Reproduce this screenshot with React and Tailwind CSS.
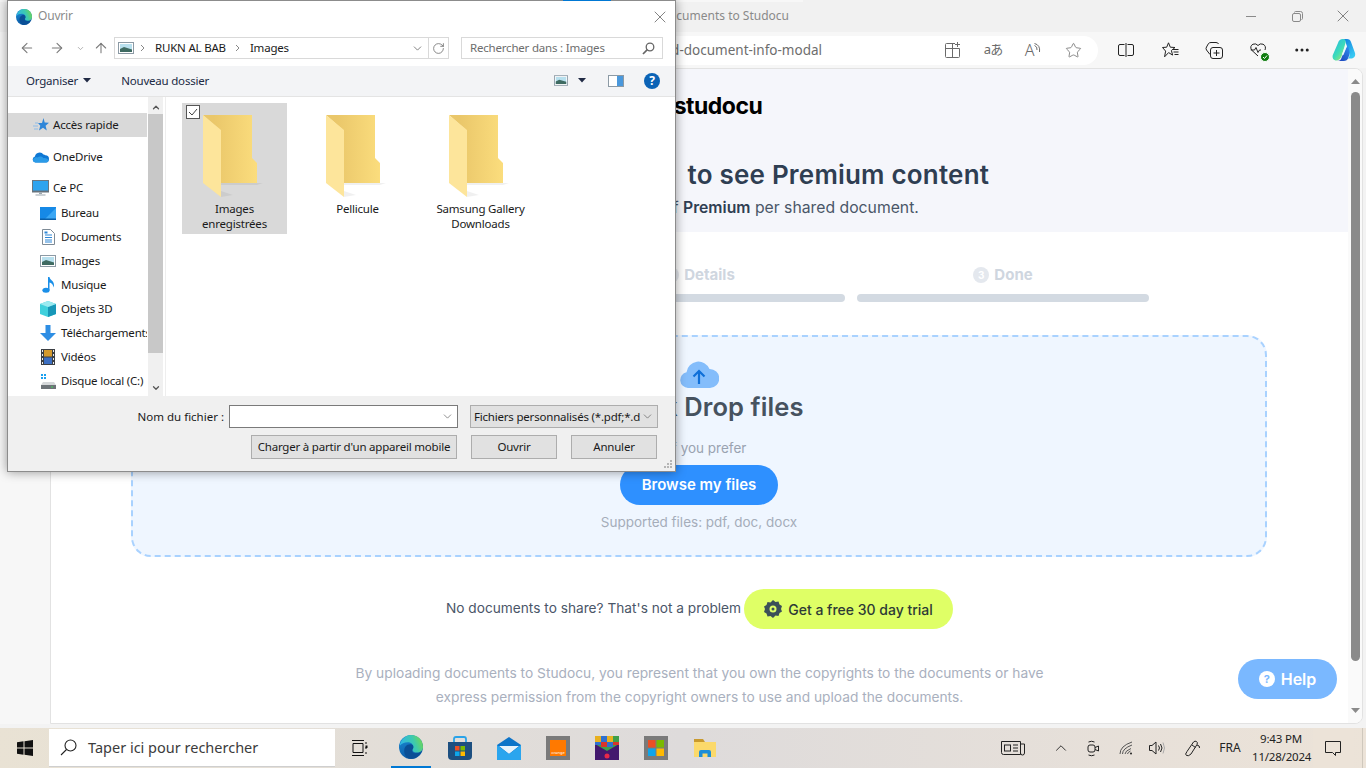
import React from "react";
import { ArrowLeft, ArrowRight, ArrowUp, ChevronDown, ChevronUp, RotateCw, X, MoreHorizontal, Star } from "lucide-react";

const Edge = ({ s = 24, id = "e" }) => (
  <svg width={s} height={s} viewBox="0 0 24 24">
    <defs>
      <linearGradient id={id + "a"} x1="0" y1="0" x2="0.3" y2="1"><stop offset="0" stopColor="#1c8fd8" /><stop offset="1" stopColor="#0b5aa6" /></linearGradient>
      <linearGradient id={id + "b"} x1="0" y1="0.6" x2="1" y2="0.3"><stop offset="0" stopColor="#2fb5e8" /><stop offset="0.6" stopColor="#3cc9b0" /><stop offset="1" stopColor="#72d84f" /></linearGradient>
    </defs>
    <circle cx="12" cy="12" r="12" fill={`url(#${id}a)`} />
    <path d="M9.5 23.5C5 21 4 15 6.5 11.5 8.5 8.8 13 8.3 14.6 10.8c.9 1.4.4 2.8-.6 3.7-1.2 1.1-1.3 2.6.5 3.4 2.5 1.1 6-.1 8-2.2-.9 4.4-7 9.6-13 7.8z" fill="#0a4f96" />
    <path d="M1 9C3 3 8 0 12 0c7 0 12 5 12 12 0 3.5-2.7 5.6-6 5.6-2.5 0-4.5-1-4.5-2.6 0-.8 1-1.5 1-3 0-2.6-2.5-4.8-5.5-4.8C5 7.200 2.500 8.500 1 10.500z" fill={`url(#${id}b)`} />
  </svg>
);

const Folder = ({ id }) => (
  <svg width="60" height="82" viewBox="0 0 60 82" className="block">
    <defs>
      <linearGradient id={id} x1="0" y1="0" x2="1" y2="0"><stop offset="0.2" stopColor="#eac76a" /><stop offset="1" stopColor="#fbdd7d" /></linearGradient>
    </defs>
    <path d="M54 68h6l-6 2H18v-2z" fill="#000" opacity="0.06" />
    <path d="M18 82l12-2-12-4z" fill="#000" opacity="0.06" />
    <path d="M0 0H49V43L54 48V68H17V15Z" fill={`url(#${id})`} />
    <path d="M0 0L18 15V82L0 68Z" fill="#fde59b" />
  </svg>
);

const SideIcon = ({ k }) => {
  switch (k) {
    case "star":
      return (
        <svg width="16" height="15" viewBox="0 0 16 15"><path d="M10.500 0l1.200 4.500 4.300.3-3.400 2.900 1.200 4.800-3.800-2.700-4 2.700 1.300-4.700L5 5h4z" fill="#2f86d8" /><path d="M2 5h3M0 8h5M1 11h4" stroke="#8fbce8" strokeWidth="1" /></svg>
      );
    case "cloud":
      return (
        <svg width="17" height="12" viewBox="0 0 17 12"><path d="M3.500 11.500a3 3 0 0 1-.6-5.900A4.800 4.800 0 0 1 11.500 3.500a3.800 3.800 0 0 1 1.900.8 3.600 3.600 0 0 1 0 7.200z" fill="#0f78d4" /><path d="M3.500 11.500a2.500 2.500 0 0 1-2-4c1-1.300 3-1.600 4-1 2-1.700 5-1 6 .7 2-.5 5 1 5 2.300 0 1-1.500 2-3.100 2z" fill="#2b9be8" /></svg>
      );
    case "pc":
      return (
        <svg width="17" height="16" viewBox="0 0 17 16"><rect x="0.500" y="0.500" width="16" height="10.500" fill="#2ea4ef" stroke="#6b7780" /><rect x="0" y="11" width="17" height="1.500" fill="#66727c" /><path d="M7 12.500h3v1.500H7zM3.500 14.500h10v1h-10z" fill="#9aa5ad" /></svg>
      );
    case "desk":
      return (
        <svg width="16" height="13" viewBox="0 0 16 13"><rect width="16" height="13" fill="#1689e6" /><path d="M16 1L5 12h11z" fill="#3ba7f4" /><rect y="11.500" width="16" height="1.500" fill="#0b5fa8" /></svg>
      );
    case "doc":
      return (
        <svg width="13" height="16" viewBox="0 0 13 16"><path d="M.5.500h8l4 4v11H.5z" fill="#fff" stroke="#7e8b96" /><path d="M3 6h7M3 8.500h7M3 11h7M3 13h7" stroke="#2e87d6" /><rect x="2.500" y="2.500" width="3" height="2" fill="#2e87d6" /></svg>
      );
    case "img":
      return <Pic w={16} h={12} />;
    case "music":
      return (
        <svg width="13" height="16" viewBox="0 0 13 16"><ellipse cx="4" cy="13.200" rx="3.600" ry="2.500" fill="#1a8fe8" /><path d="M6 13V0h1.500c.3 3 4.500 3.500 4.500 8 0 1-.3 1.800-.8 2.500.3-3-2-4.500-3.700-5V13z" fill="#1a8fe8" /></svg>
      );
    case "3d":
      return (
        <svg width="16" height="16" viewBox="0 0 16 16"><path d="M8 0l8 3v10l-8 3-8-3V3z" fill="#3fd0dc" /><path d="M8 6l8-3v10l-8 3z" fill="#1797b8" /><path d="M8 0l8 3-8 3-8-3z" fill="#9beaf0" /></svg>
      );
    case "dl":
      return (
        <svg width="16" height="16" viewBox="0 0 16 16"><path d="M5.500 0h5v8H16l-8 8-8-8h5.500z" fill="#2e8ee4" /></svg>
      );
    case "vid":
      return (
        <svg width="14" height="16" viewBox="0 0 14 16"><rect width="14" height="16" fill="#3b3f44" /><rect x="3" y="1" width="8" height="6.500" fill="#d49a2d" /><rect x="3" y="8.500" width="8" height="6.500" fill="#3c6fc2" /><path d="M1 1h1v2H1zM1 5h1v2H1zM1 9h1v2H1zM1 13h1v2H1zM12 1h1v2h-1zM12 5h1v2h-1zM12 9h1v2h-1zM12 13h1v2h-1z" fill="#eee" /></svg>
      );
    default:
      return (
        <svg width="15" height="15" viewBox="0 0 15 15"><path d="M0 0h2v2H0zM3 0h2v2H3zM0 3h2v2H0zM3 3h2v2H3z" fill="#19a0f0" /><path d="M2 8h11l2 3v4H0v-4z" fill="#d5d8da" /><rect y="11" width="15" height="4" fill="#6d7378" /><rect x="10" y="12.500" width="2" height="1" fill="#42d35a" /></svg>
      );
  }
};

const Pic = ({ w, h }) => (
  <svg width={w} height={h} viewBox="0 0 16 12">
    <rect x="0.500" y="0.500" width="15" height="11" fill="#fff" stroke="#8c9aa5" />
    <rect x="2" y="2" width="12" height="8" fill="#b8e0ee" />
    <path d="M2 7l4-2 8 2.500V10H2z" fill="#3f6b62" />
  </svg>
);

const items = [
  ["star", "Accès rapide", 0, "h-6 mt-0 bg-[#d9d9d9]"],
  ["cloud", "OneDrive", 0, "h-6 mt-2"],
  ["pc", "Ce PC", 0, "h-6 mt-[7px]"],
  ["desk", "Bureau", 1, "h-6 mt-px"],
  ["doc", "Documents", 1, "h-6"],
  ["img", "Images", 1, "h-6"],
  ["music", "Musique", 1, "h-6"],
  ["3d", "Objets 3D", 1, "h-6"],
  ["dl", "Téléchargements", 1, "h-6"],
  ["vid", "Vidéos", 1, "h-6"],
  ["disk", "Disque local (C:)", 1, "h-6"],
];

const Tile = ({ id, lines, selected }) => (
  <div className={`relative w-[105px] h-[131px] shrink-0 ${selected ? "bg-[#d9d9d9]" : ""}`}>
    {selected && (
      <div className="absolute left-1 top-0.5 w-[14px] h-[14px] bg-white border border-[#555] flex items-center justify-center">
        <svg width="10" height="10" viewBox="0 0 10 10"><path d="M1 5l3 3 5-6" fill="none" stroke="#444" strokeWidth="1" /></svg>
      </div>
    )}
    <div className="pt-3 pl-[21px]"><Folder id={id} /></div>
    <div className="mt-1 text-center text-[#1a1a1a] leading-[15px]">
      {lines.map((l) => <div key={l}>{l}</div>)}
    </div>
  </div>
);

const Dialog = () => (
  <div className="absolute left-[7px] top-0 w-[669px] h-[472px] border border-[#8c8c8c] bg-white flex flex-col shadow-[0_0_10px_rgba(0,0,0,0.4)] font-['Noto_Sans',sans-serif] text-[11.5px] tracking-[-0.2px] text-[#1a1a1a]">
    <div className="absolute left-[555px] -top-px w-12 h-px bg-[#0078d4]" />
    <div className="h-[31px] flex items-center pl-2 shrink-0">
      <Edge s={16} id="t" />
      <span className="ml-[6px] text-[#8a8a8a] text-[12px] pb-px">Ouvrir</span>
      <X size={20} strokeWidth={1.1} className="ml-auto mr-[5px] text-[#777]" />
    </div>
    <div className="h-[34px] flex items-center shrink-0 pb-[2px]">
      <ArrowLeft size={16} strokeWidth={1.6} className="ml-[11px] text-[#7b7b7b]" />
      <ArrowRight size={16} strokeWidth={1.6} className="ml-[14px] text-[#7b7b7b]" />
      <ChevronDown size={9} strokeWidth={2} className="ml-[11px] text-[#9a9a9a]" />
      <ArrowUp size={16} strokeWidth={1.6} className="ml-[8px] text-[#7b7b7b]" />
      <div className="ml-[5px] w-[335px] h-[22px] border border-[#d9d9d9] flex items-center">
        <span className="ml-[3px]"><Pic w={16} h={12} /></span>
        <svg width="6" height="8" viewBox="0 0 6 8" className="ml-[6px]"><path d="M1 1l3 3-3 3" fill="none" stroke="#888" /></svg>
        <span className="ml-[9px]">RUKN AL BAB</span>
        <svg width="6" height="8" viewBox="0 0 6 8" className="ml-[9px]"><path d="M1 1l3 3-3 3" fill="none" stroke="#888" /></svg>
        <span className="ml-[9px]">Images</span>
        <ChevronDown size={13} strokeWidth={1.5} className="ml-auto mr-[2px] text-[#666]" />
        <div className="h-full w-px bg-[#d9d9d9] ml-[2px]" />
        <RotateCw size={13} strokeWidth={1.4} className="mx-[3px] text-[#666]" />
      </div>
      <div className="ml-3 w-[202px] h-[22px] border border-[#d9d9d9] flex items-center pl-2 text-[#6d6d6d]">
        <span>Rechercher dans : Images</span>
        <svg width="13" height="13" viewBox="0 0 13 13" className="ml-auto mr-[7px]"><circle cx="8" cy="5" r="3.800" fill="none" stroke="#666" strokeWidth="1.300" /><path d="M5.300 7.700L1 12" stroke="#666" strokeWidth="1.700" /></svg>
      </div>
    </div>
    <div className="h-[31px] shrink-0 bg-[#f3f4f6] border-b border-[#e4e4e4] flex items-center pb-px">
      <span className="ml-[18px] text-[#202a44]">Organiser</span>
      <svg width="8" height="5" viewBox="0 0 8 5" className="ml-[5px]"><path d="M0 0h8L4 4.500z" fill="#202a44" /></svg>
      <span className="ml-[30px] text-[#202a44]">Nouveau dossier</span>
      <span className="ml-auto"><Pic w={14} h={11} /></span>
      <svg width="8" height="5" viewBox="0 0 8 5" className="ml-[10px]"><path d="M0 0h8L4 4.500z" fill="#202a44" /></svg>
      <svg width="16" height="12" viewBox="0 0 16 12" className="ml-[22px]"><rect x="0.500" y="0.500" width="15" height="11" fill="#fff" stroke="#8c9aa5" /><rect x="9" y="1" width="6" height="10" fill="#4a98dc" /></svg>
      <div className="ml-[20px] mr-[15px] w-4 h-4 rounded-full bg-[#0b63b6] text-white text-[12px] font-bold flex items-center justify-center leading-none">?</div>
    </div>
    <div className="flex-1 flex min-h-0">
      <div className="w-[139px] shrink-0 pt-4 overflow-hidden">
        {items.map(([k, t, sub, c]) => (
          <div key={t} className={`flex items-center relative whitespace-nowrap ${c}`}>
            <div className={`${sub ? "w-4 ml-8" : "w-[17px] ml-6"} flex justify-center shrink-0`}><SideIcon k={k} /></div>
            <span className={`${sub ? "ml-[5px]" : "ml-1"}`}>{t}</span>
          </div>
        ))}
      </div>
      <div className="ml-px w-[15px] bg-[#f0f0f0] shrink-0 flex flex-col items-center">
        <ChevronUp size={10} strokeWidth={3} className="mt-1 h-[13px] text-[#555]" />
        <div className="w-full h-[239px] bg-[#c8c8c8]" />
        <ChevronDown size={10} strokeWidth={3} className="mt-[30px] text-[#555]" />
      </div>
      <div className="flex-1 ml-[2px] border-l border-[#eeeeee] pl-4 pt-[6px] flex gap-[18px]">
        <Tile id="f1" lines={["Images", "enregistrées"]} selected />
        <Tile id="f2" lines={["Pellicule"]} />
        <Tile id="f3" lines={["Samsung Gallery", "Downloads"]} />
      </div>
    </div>
    <div className="relative h-[75px] shrink-0 bg-[#f0f0f0] pt-[9px]">
      <div className="flex justify-end items-center pr-[17px] h-[23px]">
        <span className="mr-[5px] tracking-normal">Nom du fichier :</span>
        <div className="w-[229px] h-[23px] bg-white border border-[#7a7a7a] flex items-center justify-end pr-[3px]"><ChevronDown size={13} strokeWidth={1.2} className="text-[#555]" /></div>
        <div className="ml-3 w-[188px] h-[23px] bg-[#e1e1e1] border border-[#adadad] flex items-center pl-[3px] whitespace-nowrap overflow-hidden">
          <span>Fichiers personnalisés (*.pdf;*.d</span>
          <ChevronDown size={13} strokeWidth={1.2} className="ml-auto mr-[3px] shrink-0 text-[#555]" />
        </div>
      </div>
      <div className="flex justify-end pr-[18px] mt-[7px] gap-[14px]">
        <div className="w-[206px] h-6 bg-[#e1e1e1] border border-[#adadad] flex items-center justify-center whitespace-nowrap">Charger à partir d'un appareil mobile</div>
        <div className="w-[86px] h-6 bg-[#e1e1e1] border border-[#adadad] flex items-center justify-center">Ouvrir</div>
        <div className="w-[86px] h-6 bg-[#e1e1e1] border border-[#adadad] flex items-center justify-center">Annuler</div>
      </div>
      <svg width="10" height="10" viewBox="0 0 10 10" className="absolute right-[2px] bottom-[2px]"><path d="M7 1h2v2H7zM4 4h2v2H4zM7 4h2v2H7zM1 7h2v2H1zM4 7h2v2H4zM7 7h2v2H7z" fill="#b5b5b5" /></svg>
    </div>
  </div>
);

const TbIcon = ({ children, w = "w-11", cls = "" }) => <div className={`${w} h-full flex items-center justify-center shrink-0 ${cls}`}>{children}</div>;

const BrowserTop = () => (
  <>
    <div className="h-8 bg-[#f1f1f1] flex shrink-0">
      <div className="w-[803px] h-full border-t-2 border-[#f7f7f7] flex items-center justify-end pr-[14px] pb-[2px] text-[12px] text-[#8a8a8a] font-['Noto_Sans',sans-serif] whitespace-nowrap">Upload documents to Studocu</div>
      <div className="ml-auto flex h-full">
        <TbIcon w="w-[46px]"><div className="w-[10px] h-px bg-[#8a8a8a]" /></TbIcon>
        <TbIcon w="w-[46px]">
          <svg width="11" height="11" viewBox="0 0 11 11"><rect x="0.500" y="2.500" width="8" height="8" rx="1.500" fill="none" stroke="#8a8a8a" /><path d="M2.500 1.500q0-1 1-1h5q2 0 2 2v5q0 1-1 1" fill="none" stroke="#8a8a8a" /></svg>
        </TbIcon>
        <TbIcon w="w-[46px]"><X size={20} strokeWidth={1.1} className="text-[#777]" /></TbIcon>
      </div>
    </div>
    <div className="h-9 bg-[#f7f7f7] flex items-center shrink-0">
      <div className="w-[130px] shrink-0" />
      <div className="w-[968px] h-[29px] bg-white rounded-r-full flex items-center pr-[5px] shrink-0">
        <div className="w-[692px] overflow-hidden flex justify-end whitespace-nowrap text-[13.5px] text-[#6d6d6d] font-['Noto_Sans',sans-serif]">
          <span className="shrink-0">studocu.com/fr/upload?origin=upload-document-info-modal</span>
        </div>
        <div className="ml-auto flex h-full">
          <TbIcon w="w-10">
            <svg width="16" height="16" viewBox="0 0 16 16" fill="none" stroke="#6b6b6b"><path d="M10 1.500H1.500a1 1 0 0 0-1 1v12a1 1 0 0 0 1 1h12a1 1 0 0 0 1-1V6.500h-14M7.500 1.500v14M12.500 0v5M10 2.500h5" /></svg>
          </TbIcon>
          <TbIcon w="w-10"><span className="text-[#6b6b6b] text-[13px] font-['Noto_Sans','Noto_Sans_CJK_JP',sans-serif] tracking-[-1px]">aあ</span></TbIcon>
          <TbIcon w="w-10">
            <span className="text-[#6b6b6b] text-[16px] font-['Noto_Sans',sans-serif] font-light">A</span>
            <svg width="7" height="11" viewBox="0 0 7 11" fill="none" stroke="#6b6b6b" className="mb-1"><path d="M.5 2.500Q3.500 3.500 3 7M.5.500Q6.500 2 5.500 9" /></svg>
          </TbIcon>
          <TbIcon w="w-10"><Star size={17} strokeWidth={1.1} className="text-[#6b6b6b]" /></TbIcon>
        </div>
      </div>
      <div className="ml-[6px] flex h-full">
        <TbIcon>
          <svg width="16" height="14" viewBox="0 0 16 14" fill="none" stroke="#222"><path d="M6.500 1.500H2a1.500 1.500 0 0 0-1.500 1.500v8A1.500 1.500 0 0 0 2 12.500h4.500M9.500 1.500H14a1.500 1.500 0 0 1 1.500 1.500v8a1.500 1.500 0 0 1-1.500 1.500H9.500M8 0v14" /></svg>
        </TbIcon>
        <TbIcon>
          <svg width="17" height="16" viewBox="0 0 17 16" fill="none" stroke="#222"><path d="M6.500.800l1.800 4.400 4.700.3-3.600 3 1.200 4.600-4-2.500-4 4.200 1-5.700L.5 5.500l4.200-.3zM11 7.500h5.500M11.500 10h5M12.500 12.500h4" /></svg>
        </TbIcon>
        <TbIcon>
          <svg width="18" height="17" viewBox="0 0 18 17" fill="none" stroke="#222"><path d="M5 12.500L1.500 8q-1-1.500 0-3L3.500 1.500q1-1 2.500-1h5q2 0 2.500 1.500" /><rect x="5.500" y="5.500" width="12" height="11" rx="2.500" /><path d="M11.500 8v6M8.500 11h6" /></svg>
        </TbIcon>
        <TbIcon>
          <div className="relative">
            <svg width="16" height="14" viewBox="0 0 16 14" fill="none" stroke="#222"><path d="M8 13L1.500 7Q-.5 3 3 1.200 6 0 8 2.500 10 0 13 1.200 16.500 3 15 7M.8 7H4.500L6 4.500 8 9.500 9.500 7H11" /></svg>
            <div className="absolute -right-1 -bottom-[5px] w-2 h-2 rounded-full bg-[#107c10] border border-white box-content flex items-center justify-center">
              <svg width="6" height="6" viewBox="0 0 6 6"><path d="M1 3l1.500 1.500L5 1.500" fill="none" stroke="#fff" /></svg>
            </div>
          </div>
        </TbIcon>
        <TbIcon><MoreHorizontal size={18} strokeWidth={2} className="text-[#222]" /></TbIcon>
        <TbIcon cls="pr-1">
          <svg width="24" height="24" viewBox="0 0 24 24">
            <defs>
              <linearGradient id="c1" x1="0" y1="0" x2="0.8" y2="1"><stop offset="0" stopColor="#1fb6e8" /><stop offset="0.6" stopColor="#3fdcb8" /><stop offset="1" stopColor="#a8e868" /></linearGradient>
              <linearGradient id="c2" x1="0" y1="0" x2="0.6" y2="1"><stop offset="0" stopColor="#0f7ce0" /><stop offset="1" stopColor="#38c8f2" /></linearGradient>
              <linearGradient id="c3" x1="1" y1="0" x2="0" y2="1"><stop offset="0" stopColor="#2f8ff0" /><stop offset="1" stopColor="#1c3fb8" /></linearGradient>
            </defs>
            <path d="M10 1h5c2 0 3.500 1 4 3l4 11c.8 3-1 5.500-4 5.500h-4c2 0 3-2.500 2.300-5L13.500 4C13 2 12 1 10 1z" fill="url(#c2)" />
            <path d="M6 5c.7-2.500 2.500-4 5-4 2.300 0 3 2 2.500 4L10 17c-.8 3-3 5.500-5.500 5.500C1.500 22.500 0 20 .8 17z" fill="url(#c1)" />
            <path d="M15 8c.8 0 1.300.8 2 3.500.7 2.700 1 5-1 9-1 1.800-2.500 2.500-4 2.500H5.500c2 0 3.500-1 4.300-4z" fill="url(#c3)" />
            <path d="M13.500 7.500L15 8 11.500 17 9.800 16.500z" fill="#e8fbff" opacity="0.9" />
          </svg>
        </TbIcon>
      </div>
    </div>
  </>
);

const Logo = () => (
  <div className="flex items-center justify-center gap-[7px] h-7">
    <div className="w-[30px] h-[24px] bg-black rounded-full" />
    <span className="text-[23px] font-bold text-black tracking-[-0.5px]">studocu</span>
  </div>
);

const Step = ({ n, label }) => (
  <div className="w-[292px] flex flex-col items-center">
    <div className="flex items-center gap-[5px] h-[20px] text-[15px] font-bold text-[#cfd6df]">
      <span className="w-4 h-4 rounded-full bg-[#e4e8ee] text-white text-[10px] flex items-center justify-center">{n}</span>
      {label}
    </div>
    <div className="mt-[9px] w-full h-2 rounded-full bg-[#d3dae2]" />
  </div>
);

const Page = () => (
  <div className="flex-1 min-w-0 bg-white text-[#3d4a5c] font-['Inter',sans-serif] relative overflow-hidden">
    <div className="h-[163px] bg-[#f5f6fb] pt-[23px] flex flex-col items-center">
      <Logo />
      <h1 className="mt-[38px] text-[26px] leading-[34px] font-semibold text-[#2f3e52] tracking-[0.2px] whitespace-nowrap"><span className="inline-block w-[271px]">Share documents</span> to see Premium content</h1>
      <p className="mt-[6px] text-[15.75px] leading-5 text-[#4a5668] whitespace-nowrap">Get access to 1 free day of <b className="font-semibold text-[#2f3e52]">Premium</b> per shared document.</p>
    </div>
    <div className="mt-[33px] pr-px flex justify-center gap-3">
      <Step n="1" label="Upload" />
      <Step n="2" label="Details" />
      <Step n="3" label="Done" />
    </div>
    <div className="ml-20 mr-[81px] mt-[33px] h-[222px] rounded-[20px] border-2 border-dashed border-[#a9d2ff] bg-[#eff6ff] flex flex-col items-center pt-[23px]">
      <svg width="40" height="29" viewBox="0 0 40 29"><path d="M9 28a8 8 0 0 1-1.500-15.800A12 12 0 0 1 30.500 9a9.500 9.500 0 0 1 .5 19z" fill="#84bdfb" /><path d="M20 24V11M14.500 16.500L20 11l5.500 5.500" fill="none" stroke="#0f6fd8" strokeWidth="2.200" /></svg>
      <div className="mt-px text-[25.5px] leading-[34px] font-semibold text-[#46525f] tracking-[0.1px]">A click Drop files</div>
      <div className="mt-[15px] text-[13.5px] leading-[18px] text-[#9aa3b1]">or if you prefer</div>
      <div className="mt-2 w-[158px] h-10 rounded-full bg-[#2e90ff] text-white text-[15px] font-semibold flex items-center justify-center">Browse my files</div>
      <div className="mt-2 text-[13.5px] leading-[18px] text-[#a5adba]">Supported files: pdf, doc, docx</div>
    </div>
    <div className="mt-[32px] flex justify-center items-center h-10">
      <span className="text-[13.7px] text-[#4a5668] whitespace-nowrap pb-px">No documents to share? That's not a problem</span>
      <div className="ml-[3px] w-[209px] h-10 rounded-full bg-[#dfff66] flex items-center justify-center gap-[6px] text-[14px] font-medium text-[#2d3a36] whitespace-nowrap">
        <svg width="18" height="18" viewBox="0 0 18 18"><path d="M9 0l2.500 2 3-.5 1 3 2.500 1.500-1 3 1 2.500-2.500 1.500-1 3-3-.5L9 18l-2.500-2-3 .5-1-3L0 12l1-3-1-2.500L2.500 5l1-3 3 .5z" fill="#3c5058" /><circle cx="9" cy="9" r="3.500" fill="#dfff66" /><circle cx="9" cy="9" r="1.500" fill="#3c5058" /></svg>
        Get a free 30 day trial
      </div>
    </div>
    <div className="mt-[32px] text-center text-[13.76px] leading-6 text-[#a9b0be]">
      <div>By uploading documents to Studocu, you represent that you own the copyrights to the documents or have</div>
      <div>express permission from the copyright owners to use and upload the documents.</div>
    </div>
    <div className="absolute right-[11px] top-[590px] w-[99px] h-10 rounded-full bg-[#7ab8ff] text-white flex items-center justify-center gap-[6px] text-[16px] font-semibold">
      <span className="w-4 h-4 rounded-full bg-white text-[#7ab8ff] text-[11px] font-bold flex items-center justify-center">?</span>
      Help
    </div>
  </div>
);

const Taskbar = () => (
  <div className="h-10 bg-gradient-to-r from-[#e9e2d4] via-[#dedbdb] to-[#ece3d8] flex items-center shrink-0 font-['Noto_Sans',sans-serif]">
    <div className="w-[49px] flex justify-center shrink-0">
      <svg width="16" height="16" viewBox="0 0 16 16"><path d="M0 2.300L6.500 1.300V7.500H0zM7.500 1.200L16 0V7.500H7.500zM0 8.500H6.500V14.700L0 13.700zM7.500 8.500H16V16L7.500 14.800z" fill="#111" /></svg>
    </div>
    <div className="w-[286px] h-[38px] bg-white flex items-center shrink-0 border-b border-[#cfcfcf]">
      <svg width="17" height="17" viewBox="0 0 17 17" className="ml-[11px]" fill="none" stroke="#222" strokeWidth="1.100"><circle cx="10.500" cy="6.500" r="5.500" /><path d="M6.500 10.500L1 16" /></svg>
      <span className="ml-[11px] text-[14.5px] text-[#3c3c3c] whitespace-nowrap">Taper ici pour rechercher</span>
    </div>
    <div className="ml-[17px] w-4 flex justify-center shrink-0">
      <svg width="16" height="16" viewBox="0 0 16 16" fill="none" stroke="#111"><path d="M0 .5h12M0 15.500h12M1 3.500h10v9H1zM14 2v2M14 7v2M14 12v2" strokeWidth="1" /><rect x="13.500" y="5.500" width="2" height="2.500" fill="#111" stroke="none" /></svg>
    </div>
    <div className="ml-[23px] w-10 h-10 relative flex items-center justify-center shrink-0 border-b-2 border-[#0078d4]">
      <Edge s={24} id="tb" />
    </div>
    <div className="ml-[17px] w-6 flex justify-center shrink-0">
      <svg width="24" height="24" viewBox="0 0 24 24"><path d="M6 7V3q0-2 2-2h8q2 0 2 2v4" fill="none" stroke="#2aa3e8" strokeWidth="1.800" /><path d="M0 6h24v14q0 4-4 4H4q-4 0-4-4z" fill="#1d4f80" /><rect x="7" y="10" width="4.500" height="4.500" fill="#ea4f25" /><rect x="12.500" y="10" width="4.500" height="4.500" fill="#7ab900" /><rect x="7" y="15.500" width="4.500" height="4.500" fill="#0ea5ea" /><rect x="12.500" y="15.500" width="4.500" height="4.500" fill="#ffb900" /></svg>
    </div>
    <div className="ml-[25px] w-6 flex justify-center shrink-0">
      <svg width="24" height="23" viewBox="0 0 24 23"><path d="M0 8L12 0l12 8v15H0z" fill="#0d74c8" /><path d="M2 9h20l-10 8z" fill="#e8f3fb" /><path d="M0 8l12 9 12-9v15H0z" fill="#2aa5ee" /></svg>
    </div>
    <div className="ml-[25px] w-6 h-6 bg-[#7a7a7a] flex items-center justify-center shrink-0">
      <div className="w-4 h-4 bg-[#ff7900] flex items-end justify-center"><span className="text-[4px] leading-[6px] text-white">orange</span></div>
    </div>
    <div className="ml-[25px] w-6 h-6 shrink-0 overflow-hidden">
      <svg width="24" height="24" viewBox="0 0 24 24">
        <rect width="24" height="24" fill="#43186e" />
        <path d="M0 0h24v8L12 15 0 8z" fill="#3e9f4a" />
        <path d="M0 0h6v6H0zM12 0h6v6h-6z" fill="#e8b020" />
        <path d="M6 6h6v5H6zM18 6h6v3h-6z" fill="#d8362a" />
        <path d="M6 0h6v6H6zM0 6h6v3H0zM12 6h6v5h-6z" fill="#2f6fd0" />
        <circle cx="12" cy="20" r="2.500" fill="#e8284a" />
      </svg>
    </div>
    <div className="ml-[25px] w-6 h-6 bg-[#7a7a7a] flex items-center justify-center shrink-0">
      <svg width="16" height="16" viewBox="0 0 16 16"><rect width="7.500" height="7.500" fill="#ea4f25" /><rect x="8.500" width="7.500" height="7.500" fill="#7ab900" /><rect y="8.500" width="7.500" height="7.500" fill="#0ea5ea" /><rect x="8.500" y="8.500" width="7.500" height="7.500" fill="#ffb900" /></svg>
    </div>
    <div className="ml-[26px] w-[22px] shrink-0">
      <svg width="22" height="18" viewBox="0 0 22 18"><path d="M0 0h9l2 3H0z" fill="#c99a2e" /><path d="M0 3h22v15H0z" fill="#fbd96b" /><path d="M5 18v-5q0-2 2-2h8q2 0 2 2v5h-3.500v-3.500h-5V18z" fill="#1c8ed8" /></svg>
    </div>
    <div className="ml-auto flex items-center h-full text-[#222]">
      <svg width="24" height="16" viewBox="0 0 24 16" fill="none" stroke="#222" className="mr-[27px]"><path d="M.5 1.500h19v13h-17a2 2 0 0 1-2-2zM19.500 4h4v9a1.500 1.500 0 0 1-4 0" /><rect x="3.500" y="5" width="6" height="6" /><path d="M12 5h5M12 8h5M12 11h5" /></svg>
      <ChevronUp size={18} strokeWidth={1.2} className="mr-[17px]" />
      <svg width="12" height="17" viewBox="0 0 12 17" fill="none" stroke="#222" className="mr-[20px]"><rect x="1" y="5" width="7" height="7" rx="2" /><path d="M8 7.500l3.500-1.500v5L8 9.500M1.500 2Q4.500.500 7.500 2M1.500 15Q4.500 16.500 7.500 15" /></svg>
      <svg width="14" height="14" viewBox="0 0 14 14" fill="none" stroke="#555" className="mr-[16px]"><path d="M1 13Q1 5 13 1M3.500 13Q3.500 7.500 13 4M6 13Q6 10 12 7.500M8.500 13q0-1.500 3-3" /><circle cx="12" cy="12.500" r="1" fill="#222" stroke="none" /></svg>
      <svg width="16" height="14" viewBox="0 0 16 14" fill="none" stroke="#222" className="mr-[19px]"><path d="M.5 4.500h2.500L7 1v12L3 9.500H.5zM9.500 4.500q2 2.500 0 5M11.500 3q3 4 0 8" /><path d="M14 1.500q3 5.500 0 11" stroke="#aaa" /></svg>
      <svg width="17" height="17" viewBox="0 0 17 17" fill="none" stroke="#222" className="mr-[16px]"><path d="M3 11.500L9.500 2q1.500-1.500 3-.5t.5 3L7 14q-2.500 2.500-4.500 1.500T3 11.500zM8 5l3.500 2.500M13 5q3 .5 2.500 3" /></svg>
      <span className="text-[12px] w-[26px] text-center">FRA</span>
      <div className="ml-[9px] w-[58px] text-center text-[11.5px] tracking-[-0.2px] leading-[18px] whitespace-nowrap"><div>9:43 PM</div><div>11/28/2024</div></div>
      <div className="ml-[3px] w-[40px] h-full flex items-center justify-center bg-[#ece3d8]">
        <svg width="16" height="15" viewBox="0 0 16 15" fill="none" stroke="#222"><path d="M.5.500h15v11H10.500v3l-3-3H.5z" /></svg>
      </div>
      <div className="w-[9px] h-full" />
      <div className="w-1 h-full border-l border-[#cfc8bd]" />
    </div>
  </div>
);

export default function App() {
  return (
    <div className="relative w-[1366px] h-[768px] overflow-hidden flex flex-col bg-[#f7f7f7]">
      <div className="h-[728px] flex flex-col shrink-0">
        <BrowserTop />
        <div className="flex-1 flex min-h-0 pr-[3px] pb-1 bg-[#f3f3f3]">
          <div className="w-[50px] shrink-0 bg-[#f7f7f7]" />
          <div className="flex-1 flex min-w-0 rounded-tr-lg rounded-br-lg overflow-hidden border-t border-b border-l border-r border-[#e2e2e2] bg-white">
            <Page />
            <div className="w-[14px] shrink-0 bg-[#fafafa] flex flex-col items-center">
              <svg width="9" height="5" viewBox="0 0 9 5" className="mt-[10px]"><path d="M0 5L4.500 0 9 5z" fill="#8a8a8a" /></svg>
              <div className="mt-[8px] w-[9px] h-[569px] rounded-full bg-[#8a8a8a]" />
              <svg width="9" height="5" viewBox="0 0 9 5" className="mt-[47px]"><path d="M0 0L4.500 5 9 0z" fill="#8a8a8a" /></svg>
            </div>
          </div>
        </div>
      </div>
      <Taskbar />
      <Dialog />
    </div>
  );
}
